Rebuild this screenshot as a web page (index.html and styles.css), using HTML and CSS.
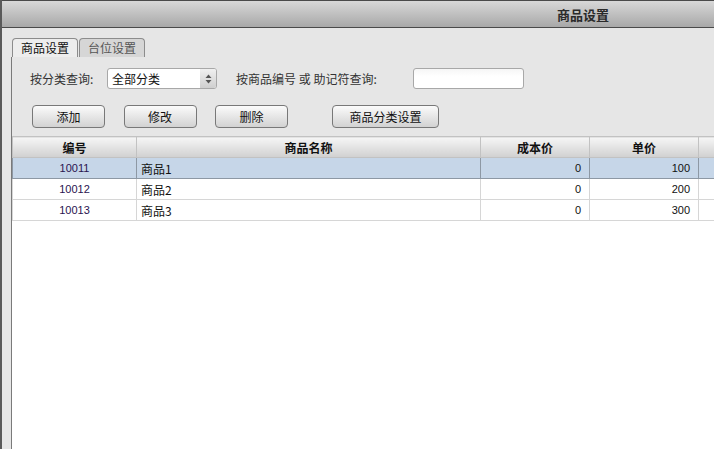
FILE: index.html
```html
<!DOCTYPE html>
<html lang="zh-CN">
  <head>
    <meta charset="UTF-8" />
    <title>商品设置</title>
    <link rel="stylesheet" href="styles.css">
  </head>
  <body>
    <div class="window">
      <div class="titlebar"><span class="title">商品设置</span></div>
      <div class="content">
        <div class="tabs">
          <div class="tab active">商品设置</div>
          <div class="tab">台位设置</div>
        </div>
        <div class="panel">
          <div class="filters">
            <span class="label label-cat">按分类查询:</span>
            <div class="select">
              <span class="select-value">全部分类</span>
              <span class="select-arrow">
                <svg width="7" height="10" viewBox="0 0 7 10">
                  <path d="M3.5 0.5 L6.5 4 L0.5 4 Z" fill="#555" />
                  <path d="M0.5 6 L6.5 6 L3.5 9.5 Z" fill="#555" />
                </svg>
              </span>
            </div>
            <span class="label label-code">按商品编号 或 助记符查询:</span>
            <input class="search" type="text" />
          </div>
          <div class="actions">
            <button class="btn">添加</button>
            <button class="btn">修改</button>
            <button class="btn">删除</button>
            <button class="btn btn-wide">商品分类设置</button>
          </div>
          <div class="grid-wrap">
            <table class="grid">
              <thead>
                <tr>
                  <th class="col-code">编号</th>
                  <th class="col-name">商品名称</th>
                  <th class="col-cost">成本价</th>
                  <th class="col-price">单价</th>
                  <th></th>
                </tr>
              </thead>
              <tbody>
                <tr class="selected">
                  <td class="num center">10011</td>
                  <td>商品1</td>
                  <td class="num right">0</td>
                  <td class="num right">100</td>
                  <td></td>
                </tr>
                <tr>
                  <td class="num center">10012</td>
                  <td>商品2</td>
                  <td class="num right">0</td>
                  <td class="num right">200</td>
                  <td></td>
                </tr>
                <tr>
                  <td class="num center">10013</td>
                  <td>商品3</td>
                  <td class="num right">0</td>
                  <td class="num right">300</td>
                  <td></td>
                </tr>
              </tbody>
            </table>
          </div>
        </div>
      </div>
    </div>
  </body>
</html>
```

FILE: styles.css
```css
body {
  margin: 0;
  overflow: hidden;
  background-color: #e6e6e6;
  font-family: "Noto Sans CJK SC", "DejaVu Sans", sans-serif;
  font-size: 12px;
  color: #222;
}

.window {
  display: flex;
  flex-direction: column;
  height: 449px;
  border-left: 2px solid #5a5a5a;
}

.titlebar {
  height: 26px;
  border-top: 1px solid #4a4a4a;
  border-bottom: 1px solid #4a4a4a;
  background: linear-gradient(#d8d8d8, #a8a8a8);
}

.title {
  display: block;
  padding-left: 555px;
  line-height: 28px;
  font-size: 13px;
  font-weight: 700;
  color: #2a2a2a;
  white-space: nowrap;
}

.content {
  flex: 1;
  display: flex;
  flex-direction: column;
  padding: 10px 0 0 9px;
  min-height: 0;
}

.tabs {
  display: flex;
  margin-left: 1px;
  height: 19px;
}

.tab {
  width: 64px;
  height: 18px;
  border: 1px solid #8c8c8c;
  border-bottom: none;
  border-radius: 4px 4px 0 0;
  background-color: #d6d6d6;
  color: #555;
  font-size: 12px;
  line-height: 18px;
  text-align: center;
  margin-right: 1px;
}

.tab.active {
  background-color: #ededed;
  color: #111;
}

.panel {
  flex: 1;
  display: flex;
  flex-direction: column;
  border-left: 1px solid #7a7a7a;
  min-height: 0;
}

.filters {
  display: flex;
  align-items: center;
  height: 21px;
  margin-top: 11px;
  padding-left: 18px;
}

.label {
  color: #333;
  white-space: nowrap;
}

.label-cat {
  width: 77px;
}

.label-code {
  width: 177px;
  margin-left: 19px;
}

.select {
  display: flex;
  width: 108px;
  height: 19px;
  border: 1px solid #a8a8a8;
  border-radius: 3px;
  background-color: #fff;
  overflow: hidden;
}

.select-value {
  flex: 1;
  padding-left: 4px;
  line-height: 19px;
  color: #111;
}

.select-arrow {
  display: flex;
  align-items: center;
  justify-content: center;
  width: 16px;
  background: linear-gradient(#f0f0f0, #cfcfcf);
}

.search {
  width: 109px;
  height: 19px;
  padding: 0;
  border: 1px solid #a8a8a8;
  border-radius: 3px;
  background: linear-gradient(#f6f6f6, #fff 40%);
  outline: none;
}

.actions {
  display: flex;
  gap: 18.5px;
  margin-top: 16px;
  padding-left: 20px;
}

.btn {
  width: 73px;
  height: 23px;
  padding: 0;
  border: 1px solid #787878;
  border-radius: 4px;
  background: linear-gradient(#fbfbfb, #d2d2d2);
  font-family: inherit;
  font-size: 12px;
  color: #111;
}

.btn-wide {
  width: 107px;
  margin-left: 25.5px;
}

.grid-wrap {
  flex: 1;
  margin-top: 8px;
  background-color: #fff;
  overflow: hidden;
}

.grid {
  border-collapse: collapse;
  table-layout: fixed;
  width: 760px;
}

.grid th {
  height: 20px;
  padding: 0;
  border: 1px solid #c2c2c2;
  background: linear-gradient(#f6f6f6, #d0d0d0);
  font-size: 12px;
  font-weight: 700;
  color: #111;
  text-align: center;
}

.grid .col-code {
  width: 123px;
}

.grid .col-name {
  width: 343px;
}

.grid .col-cost,
.grid .col-price {
  width: 108px;
}

.grid td {
  height: 20px;
  padding: 0 4px;
  border: 1px solid #d6d6d6;
  color: #111;
  white-space: nowrap;
}

.grid tr.selected td {
  background-color: #c6d6e8;
  border: 1px solid #8d98a4;
}

.grid td.num {
  font-family: "Liberation Sans", Arial, sans-serif;
  font-size: 11px;
}

.grid td.center {
  text-align: center;
  color: #2a1450;
}

.grid td.right {
  text-align: right;
  padding-right: 8px;
}
```
